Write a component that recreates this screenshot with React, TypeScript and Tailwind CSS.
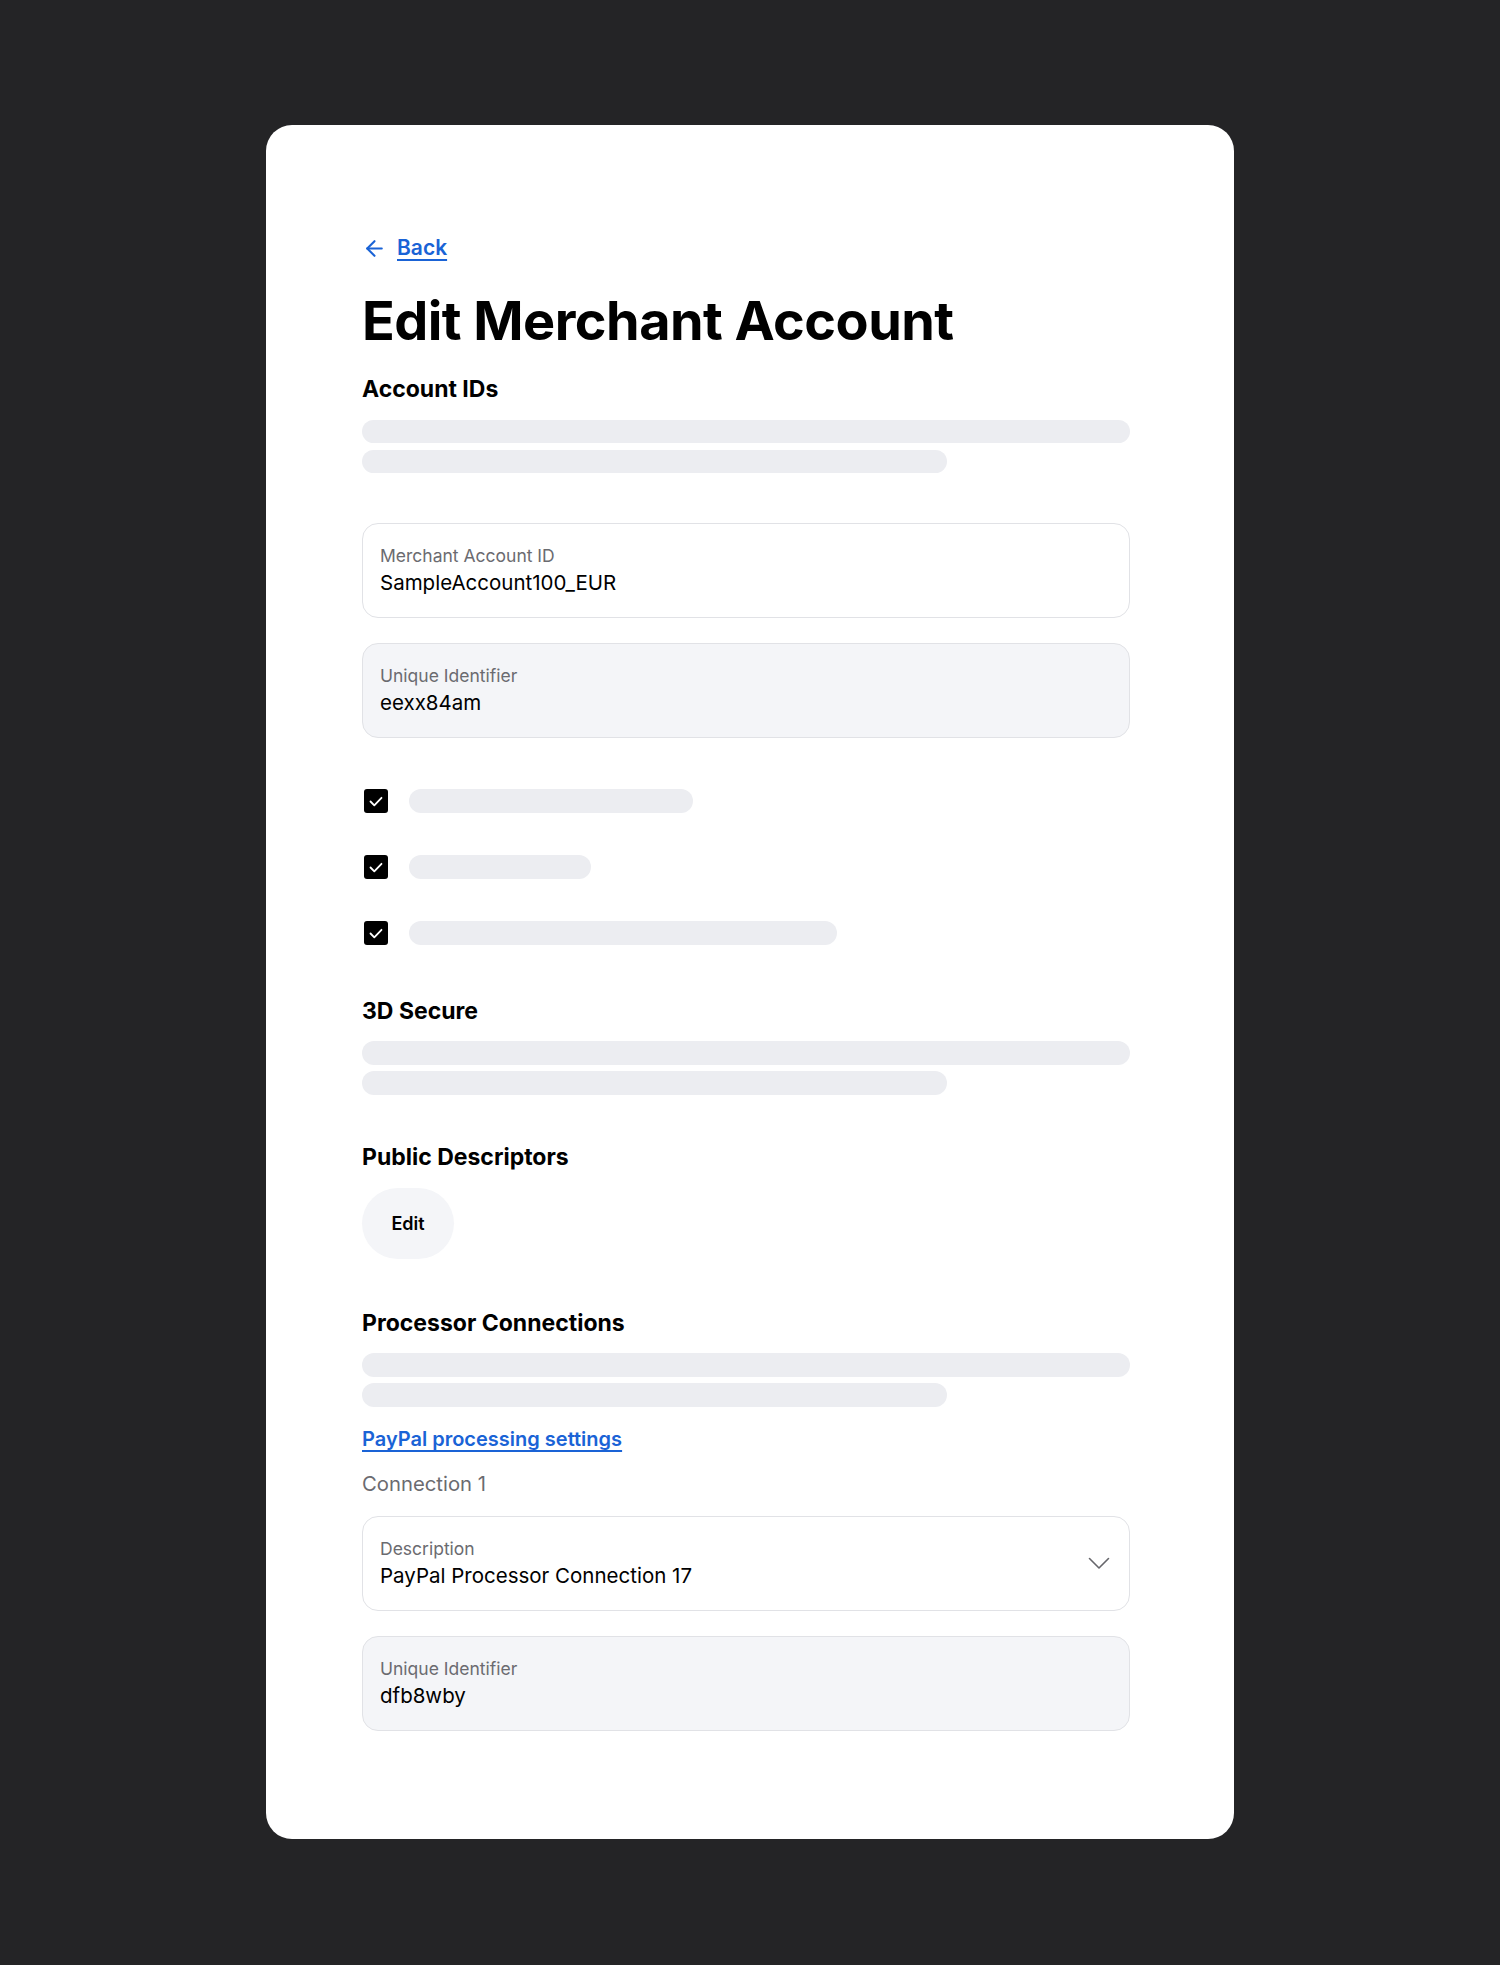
import { ArrowLeft } from "lucide-react";

const font = { fontFamily: "Inter, 'Noto Sans', sans-serif" };

function Skeleton({ w = "w-full", h = "h-[23px]" }: { w?: string; h?: string }) {
  return <div className={`${w} ${h} rounded-full bg-[#ecedf1]`} />;
}

function Heading({ children }: { children: React.ReactNode }) {
  return <h2 className="text-[23px] font-bold leading-[28px] text-black">{children}</h2>;
}

function Field({
  label,
  value,
  readOnly,
  select,
}: {
  label: string;
  value: string;
  readOnly?: boolean;
  select?: boolean;
}) {
  return (
    <div
      className={`flex h-[95px] items-center justify-between rounded-2xl border border-[#e1e2e6] px-[17px] ${
        readOnly ? "bg-[#f4f5f8]" : "bg-white"
      }`}
    >
      <div className="flex flex-col gap-[5px]">
        <span className="text-[17.5px] leading-[20px] text-[#6b6b70]">{label}</span>
        <span className="text-[20.5px] leading-[24px] text-black">{value}</span>
      </div>
      {select && (
        <svg width="22" height="13" viewBox="0 0 22 13" fill="none" className="mr-[2px]">
          <path d="M1.5 1.5L11 11l9.5-9.5" stroke="#66666b" strokeWidth="1.6" strokeLinecap="round" strokeLinejoin="round" />
        </svg>
      )}
    </div>
  );
}

function CheckRow({ w }: { w: string }) {
  return (
    <div className="flex items-center gap-[21px] pl-[2px]">
      <div className="flex h-6 w-6 items-center justify-center rounded-[3px] bg-black">
        <svg width="14" height="11" viewBox="0 0 14 11" fill="none">
          <path d="M1.5 5.5l3.8 3.8L12.5 1.8" stroke="white" strokeWidth="1.8" strokeLinecap="round" strokeLinejoin="round" />
        </svg>
      </div>
      <Skeleton w={w} h="h-6" />
    </div>
  );
}

export default function App() {
  return (
    <main className="min-h-[1965px] bg-[#242426] pt-[125px]" style={font}>
      <div className="mx-auto w-[968px] rounded-[26px] bg-white pb-[108px] pl-[96px] pt-[111px]">
        <div className="w-[768px]">
          <a href="#" className="flex h-6 items-center gap-[10px] text-[#1a63d6]">
            <ArrowLeft className="h-[25px] w-[25px]" strokeWidth={2} />
            <span className="text-[21px] font-semibold leading-[24px] underline decoration-[1.5px] underline-offset-[4px]">
              Back
            </span>
          </a>

          <h1 className="mt-[31px] text-[54px] font-bold leading-[60px] tracking-[-0.01em] text-black">
            Edit Merchant Account
          </h1>

          <div className="mt-[24px]">
            <Heading>Account IDs</Heading>
          </div>
          <div className="mt-[17px] flex flex-col gap-[7px]">
            <Skeleton />
            <Skeleton w="w-[585px]" />
          </div>

          <div className="mt-[50px] flex flex-col gap-[25px]">
            <Field label="Merchant Account ID" value="SampleAccount100_EUR" />
            <Field label="Unique Identifier" value="eexx84am" readOnly />
          </div>

          <div className="mt-[51px] flex flex-col gap-[42px]">
            <CheckRow w="w-[284px]" />
            <CheckRow w="w-[182px]" />
            <CheckRow w="w-[428px]" />
          </div>

          <div className="mt-[52px]">
            <Heading>3D Secure</Heading>
          </div>
          <div className="mt-[16px] flex flex-col gap-[6px]">
            <Skeleton h="h-6" />
            <Skeleton w="w-[585px]" h="h-6" />
          </div>

          <div className="mt-[48px]">
            <Heading>Public Descriptors</Heading>
          </div>
          <button className="mt-[17px] h-[71px] w-[92px] rounded-full bg-[#f4f5f8] text-[18px] font-semibold text-black">
            Edit
          </button>

          <div className="mt-[50px]">
            <Heading>Processor Connections</Heading>
          </div>
          <div className="mt-[16px] flex flex-col gap-[6px]">
            <Skeleton h="h-6" />
            <Skeleton w="w-[585px]" h="h-6" />
          </div>

          <a
            href="#"
            className="mt-[20px] block text-[20px] font-semibold leading-[24px] text-[#1a63d6] underline decoration-[1.5px] underline-offset-[4px]"
          >
            PayPal processing settings
          </a>
          <p className="mt-[21px] text-[20.3px] leading-[24px] text-[#6b6b70]">Connection 1</p>

          <div className="mt-[20px] flex flex-col gap-[25px]">
            <Field label="Description" value="PayPal Processor Connection 17" select />
            <Field label="Unique Identifier" value="dfb8wby" readOnly />
          </div>
        </div>
      </div>
    </main>
  );
}
